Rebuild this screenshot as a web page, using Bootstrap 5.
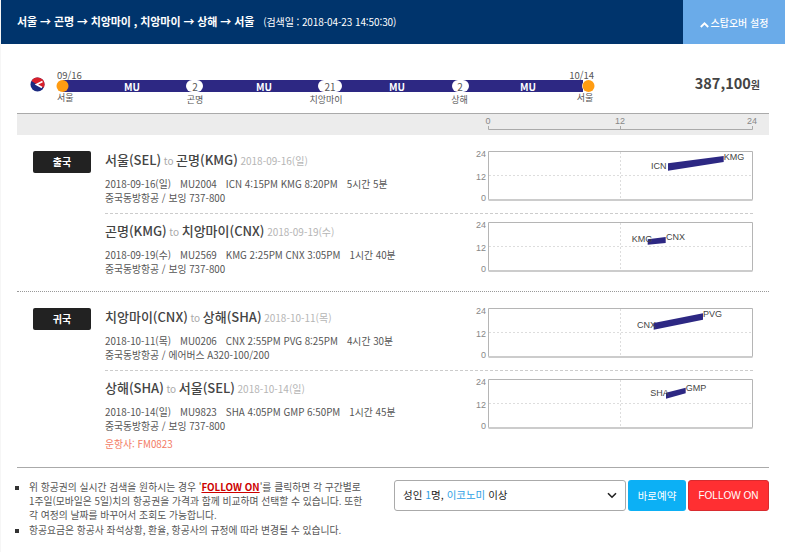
<!DOCTYPE html>
<html lang="ko">
<head>
<meta charset="utf-8">
<link href="https://cdn.jsdelivr.net/npm/bootstrap@5.3.0/dist/css/bootstrap.min.css" rel="stylesheet">
<style>
html{background:#f6f6f6;overflow:hidden;height:552px}
body{font-family:"Noto Sans CJK KR","Noto Sans",sans-serif;font-size:10px;color:#444;background:#fff;margin-left:1px;height:552px;overflow:hidden;line-height:1.4}
.topbar{height:44px;background:#00346c;color:#fff}
.topbar-title{padding-left:16px;font-size:11px;font-weight:700;letter-spacing:-.1px}
.topbar-title small{font-size:10px;font-weight:400;margin-left:9px}
.stop-btn{width:102px;background:#6aabe9;color:#fff;font-size:10px;border:0;border-radius:0;font-weight:500}
.stop-btn svg{margin-right:2px;vertical-align:-1px}
.route{height:69px;padding:0 25px 0 16px}
.route-price{font-size:14.5px;font-weight:700;color:#444;line-height:1;margin-top:9px}
.route-price span{font-size:10px}
.route-svg{display:block}
.route-svg text{font-family:"Noto Sans CJK KR",sans-serif}
.axis-band{margin:0 16px;height:22px;background:#ececec;border-top:1px solid #aaa}
.axis-band svg{display:block;margin-left:auto}
.trip{margin:0 16px;padding-right:16px}
.trip-first{padding-top:16px}
.trip-second{padding-top:16px;border-top:1px dotted #999}
.trip-tag{width:58px;height:22px;margin:0 14px 0 16px;background:#222;color:#fff;font-size:10px;font-weight:700;line-height:22px;text-align:center;border-radius:2px;flex:none}
.seg{display:flex;justify-content:space-between;padding-bottom:8px}
.seg+.seg{border-top:1px dashed #ccc;padding-top:8px}
.trip-first .seg+.seg{padding-bottom:15px}
.trip-second .seg+.seg{padding-bottom:16px}
.seg-head{font-size:13px;font-weight:500;color:#444;line-height:18px;height:18px;margin-bottom:8px;word-spacing:-1px}
.seg-head i{font-style:normal;font-weight:400;font-size:10px;color:#aaa}
.seg-head em{font-style:normal;font-weight:400;font-size:10px;color:#b5b5b5}
.seg-line{font-size:9.8px;line-height:14px;height:14px;color:#555}
.seg-line span{margin-right:6.3px}
.seg-op{color:#f37a63;margin-top:4px}
.mini-chart{display:block;flex:none;margin-top:-2px}
.mini-chart text{font-family:"Liberation Sans",sans-serif}
.foot{margin:0 16px;border-top:1px solid #aaa;padding-top:12px}
.notes{margin:0;padding:0 0 0 12px;width:349px;list-style:square;font-size:9.8px;line-height:14.2px;color:#555;word-break:keep-all}
.notes b{color:#c00;text-decoration:underline;font-weight:700}
.notes li::marker{color:#333}
.actions{gap:2px;height:31px}
.cabin{width:232px;height:31px;border:1px solid #aaa;border-radius:3px;background:#fff;color:#222;font-size:10.5px;padding:0 8px;font-weight:400}
.cabin span{color:#2e9fe6}
.go-btn,.follow-btn{height:31px;border-radius:3px;font-size:10.5px;padding:0;color:#fff}
.go-btn{width:58px;background:#0cb0f5;border:0}
.follow-btn{width:81px;background:#ff2f32;border:1px solid #d92b2f;font-family:"Liberation Sans",sans-serif;font-size:10px}
</style>
</head>
<body>
<div class="topbar d-flex justify-content-between align-items-stretch">
  <div class="topbar-title d-flex align-items-center">서울 → 곤명 → 치앙마이 , 치앙마이 → 상해 → 서울<small>(검색일 : 2018-04-23 14:50:30)</small></div>
  <button class="btn stop-btn" type="button"><svg width="9" height="6" viewBox="0 0 9 6"><path d="M.8 5 4.5 1.4 8.2 5" fill="none" stroke="#fff" stroke-width="1.9"/></svg>스탑오버 설정</button>
</div>

<div class="route d-flex align-items-center justify-content-between">
  <svg class="route-svg" width="580" height="69" viewBox="17 44 580 69">
    <circle cx="37.500" cy="84.500" r="7" fill="#1b2a80"/>
    <path d="M31.500 81a7 7 0 0 1 13 3.500c0 1.200-.3 2.300-.8 3.300L37 84.500Z" fill="#d81f2a"/>
    <path d="M42.500 81.500 36.500 84.500 42 87.500" fill="none" stroke="#fff" stroke-width="1.700"/>
    <text x="57" y="79" font-size="9.500" fill="#555">09/16</text>
    <text x="57" y="100.500" font-size="9" fill="#555">서울</text>
    <rect x="63" y="80" width="520" height="12" fill="#2d2883"/>
    <g font-size="10" font-weight="700" fill="#fff" text-anchor="middle"><text x="132" y="90.500">MU</text><text x="264" y="90.500">MU</text><text x="397" y="90.500">MU</text><text x="528" y="90.500">MU</text></g>
    <g fill="#fff"><rect x="186" y="80" width="17" height="12" rx="6"/><rect x="318" y="80" width="24" height="12" rx="6"/><rect x="452" y="80" width="17" height="12" rx="6"/><rect x="582" y="80" width="12" height="12" rx="6"/></g>
    <g font-size="10" fill="#555" text-anchor="middle"><text x="195" y="90.500">2</text><text x="330" y="90.500">21</text><text x="460" y="90.500">2</text></g>
    <g font-size="9" fill="#555" text-anchor="middle"><text x="195" y="102.500">곤명</text><text x="326" y="102.500">치앙마이</text><text x="459.500" y="102.500">상해</text><text x="585" y="100.500">서울</text></g>
    <text x="594" y="79" font-size="9.500" fill="#555" text-anchor="end">10/14</text>
    <circle cx="62.500" cy="86" r="6" fill="#ff9c12"/><circle cx="588.500" cy="86" r="6" fill="#ff9c12"/>
  </svg>
  <div class="route-price">387,100<span>원</span></div>
</div>

<div class="axis-band">
  <svg width="300" height="21" viewBox="0 0 300 21" fill="none">
    <path d="M19.500 12v3.500h264V12M151.500 12v3.500" stroke="#aaa"/>
    <g font-family="Liberation Sans,sans-serif" font-size="9" fill="#888" text-anchor="middle"><text x="19" y="10">0</text><text x="151" y="10">12</text><text x="283" y="10">24</text></g>
  </svg>
</div>

<div class="trip trip-first d-flex">
  <div class="trip-tag">출국</div>
  <div class="flex-grow-1">
    <div class="seg">
      <div class="seg-info">
        <div class="seg-head">서울(SEL) <i>to</i> 곤명(KMG) <em>2018-09-16(일)</em></div>
        <div class="seg-line"><span>2018-09-16(일)</span> <span>MU2004</span> <span>ICN 4:15PM KMG 8:20PM</span> 5시간 5분</div>
        <div class="seg-line">중국동방항공 / 보잉 737-800</div>
      </div>
      <svg class="mini-chart" width="280" height="53" viewBox="0 -2 280 53"><g fill="none"><path d="M15.500 .5H279.500V48.500H15.500Z" stroke="#b5b5b5"/><path d="M16 24.500H279M147.500 1V48" stroke="#ddd" stroke-dasharray="2 2"/><path d="M15.500 49h264" stroke="#ccc" stroke-width="2"/></g><g font-size="9" fill="#888" text-anchor="end"><text x="13" y="6">24</text><text x="13" y="29">12</text><text x="13" y="50">0</text></g><path d="M195 12.300V19.700L250.700 11V5Z" fill="#2d2883"/><g font-size="9" fill="#444"><text x="178" y="17.500">ICN</text><text x="250.700" y="9">KMG</text></g></svg>
    </div>
    <div class="seg">
      <div class="seg-info">
        <div class="seg-head">곤명(KMG) <i>to</i> 치앙마이(CNX) <em>2018-09-19(수)</em></div>
        <div class="seg-line"><span>2018-09-19(수)</span> <span>MU2569</span> <span>KMG 2:25PM CNX 3:05PM</span> 1시간 40분</div>
        <div class="seg-line">중국동방항공 / 보잉 737-800</div>
      </div>
      <svg class="mini-chart" width="280" height="53" viewBox="0 -2 280 53"><g fill="none"><path d="M15.500 .5H279.500V48.500H15.500Z" stroke="#b5b5b5"/><path d="M16 24.500H279M147.500 1V48" stroke="#ddd" stroke-dasharray="2 2"/><path d="M15.500 49h264" stroke="#ccc" stroke-width="2"/></g><g font-size="9" fill="#888" text-anchor="end"><text x="13" y="6">24</text><text x="13" y="29">12</text><text x="13" y="50">0</text></g><path d="M174.700 17.300V22.700L192.700 21V15Z" fill="#2d2883"/><g font-size="9" fill="#444"><text x="158.700" y="19.500">KMG</text><text x="193" y="18">CNX</text></g></svg>
    </div>
  </div>
</div>

<div class="trip trip-second d-flex">
  <div class="trip-tag">귀국</div>
  <div class="flex-grow-1">
    <div class="seg">
      <div class="seg-info">
        <div class="seg-head">치앙마이(CNX) <i>to</i> 상해(SHA) <em>2018-10-11(목)</em></div>
        <div class="seg-line"><span>2018-10-11(목)</span> <span>MU0206</span> <span>CNX 2:55PM PVG 8:25PM</span> 4시간 30분</div>
        <div class="seg-line">중국동방항공 / 에어버스 A320-100/200</div>
      </div>
      <svg class="mini-chart" width="280" height="53" viewBox="0 -2 280 53"><g fill="none"><path d="M15.500 .5H279.500V48.500H15.500Z" stroke="#b5b5b5"/><path d="M16 24.500H279M147.500 1V48" stroke="#ddd" stroke-dasharray="2 2"/><path d="M15.500 49h264" stroke="#ccc" stroke-width="2"/></g><g font-size="9" fill="#888" text-anchor="end"><text x="13" y="6">24</text><text x="13" y="29">12</text><text x="13" y="50">0</text></g><path d="M180.700 15V21.700L230 11.700V5.300Z" fill="#2d2883"/><g font-size="9" fill="#444"><text x="164" y="19.500">CNX</text><text x="230" y="8.500">PVG</text></g></svg>
    </div>
    <div class="seg">
      <div class="seg-info">
        <div class="seg-head">상해(SHA) <i>to</i> 서울(SEL) <em>2018-10-14(일)</em></div>
        <div class="seg-line"><span>2018-10-14(일)</span> <span>MU9823</span> <span>SHA 4:05PM GMP 6:50PM</span> 1시간 45분</div>
        <div class="seg-line">중국동방항공 / 보잉 737-800</div>
        <div class="seg-line seg-op">운항사: FM0823</div>
      </div>
      <svg class="mini-chart" width="280" height="53" viewBox="0 -2 280 53"><g fill="none"><path d="M15.500 .5H279.500V48.500H15.500Z" stroke="#b5b5b5"/><path d="M16 24.500H279M147.500 1V48" stroke="#ddd" stroke-dasharray="2 2"/><path d="M15.500 49h264" stroke="#ccc" stroke-width="2"/></g><g font-size="9" fill="#888" text-anchor="end"><text x="13" y="6">24</text><text x="13" y="29">12</text><text x="13" y="50">0</text></g><path d="M193 13.700V19.700L212.700 14.300V8.700Z" fill="#2d2883"/><g font-size="9" fill="#444"><text x="177.300" y="16.500">SHA</text><text x="212.700" y="12">GMP</text></g></svg>
    </div>
  </div>
</div>

<div class="foot d-flex justify-content-between align-items-start">
  <ul class="notes">
    <li>위 항공권의 실시간 검색을 원하시는 경우 '<b>FOLLOW ON</b>'를 클릭하면 각 구간별로 1주일(모바일은 5일)치의 항공권을 가격과 함께 비교하며 선택할 수 있습니다. 또한 각 여정의 날짜를 바꾸어서 조회도 가능합니다.</li>
    <li>항공요금은 항공사 좌석상황, 환율, 항공사의 규정에 따라 변경될 수 있습니다.</li>
  </ul>
  <div class="actions d-flex">
    <div class="cabin d-flex align-items-center justify-content-between"><div>성인 <span>1</span>명, <span>이코노미</span> 이상</div><svg width="10" height="7" viewBox="0 0 10 7"><path d="M1 1.200 5 5.200 9 1.200" fill="none" stroke="#222" stroke-width="1.600"/></svg></div>
    <button class="btn go-btn" type="button">바로예약</button>
    <button class="btn follow-btn" type="button">FOLLOW ON</button>
  </div>
</div>
<script src="https://cdn.jsdelivr.net/npm/bootstrap@5.3.0/dist/js/bootstrap.bundle.min.js"></script>
</body>
</html>
